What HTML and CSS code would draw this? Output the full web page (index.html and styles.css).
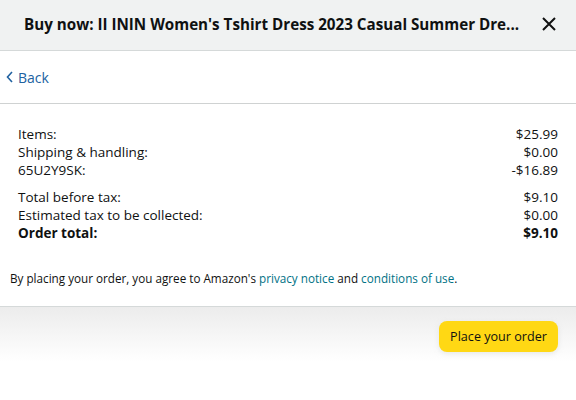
FILE: index.html
```html
<!DOCTYPE html>
<html>
<head>
<meta charset="utf-8">
<link rel="stylesheet" href="styles.css">
</head>
<body>
<div class="header">
  <div class="title">Buy now: II ININ Women's Tshirt Dress 2023 Casual Summer Dre...</div>
  <button class="close" aria-label="Close">
    <svg width="14" height="14" viewBox="0 0 14 14"><path d="M1 1L13 13M13 1L1 13" stroke="#111" stroke-width="2" fill="none"/></svg>
  </button>
</div>
<div class="backrow">
  <a class="back">
    <svg width="7" height="12" viewBox="0 0 7 12"><path d="M6 1L1.5 6L6 11" stroke="#2162a1" stroke-width="1.6" fill="none"/></svg>
    <span>Back</span>
  </a>
</div>
<div class="summary">
  <div class="group">
    <div class="row"><span>Items:</span><span>$25.99</span></div>
    <div class="row"><span>Shipping &amp; handling:</span><span>$0.00</span></div>
    <div class="row"><span>65U2Y9SK:</span><span>-$16.89</span></div>
  </div>
  <div class="group">
    <div class="row"><span>Total before tax:</span><span>$9.10</span></div>
    <div class="row"><span>Estimated tax to be collected:</span><span>$0.00</span></div>
    <div class="row total"><span>Order total:</span><span>$9.10</span></div>
  </div>
</div>
<div class="legal">By placing your order, you agree to Amazon's <a class="link">privacy notice</a> and <a class="link">conditions of use</a>.</div>
<div class="footer">
  <button class="place">Place your order</button>
</div>
</body>
</html>
```
FILE: styles.css
```css
* { box-sizing: border-box; }
html, body { margin: 0; padding: 0; background: #fff; }
body {
  font-family: "Open Sans", "Noto Sans", sans-serif;
  color: #0f1111;
  width: 576px;
  height: 400px;
  overflow: hidden;
}
.header {
  height: 51px;
  background: #f0f2f2;
  border-bottom: 1px solid #d5d9d9;
  display: flex;
  align-items: center;
  padding: 0 20px 0 24px;
}
.title {
  flex: 1;
  min-width: 0;
  font-size: 15.2px;
  font-weight: 700;
  white-space: nowrap;
  padding-bottom: 3px;
}
.close {
  border: 0;
  background: none;
  padding: 0;
  width: 14px;
  height: 14px;
  display: flex;
  margin-bottom: 3px;
}
.backrow {
  height: 53px;
  border-bottom: 1px solid #cfd2d2;
  display: flex;
  align-items: center;
  padding-left: 6px;
}
.back {
  display: flex;
  align-items: center;
  gap: 5px;
  color: #2162a1;
  font-size: 14px;
}
.summary {
  padding: 21px 18px 0 18px;
  display: flex;
  flex-direction: column;
  gap: 9px;
}
.row {
  display: flex;
  justify-content: space-between;
  font-size: 13.5px;
  line-height: 18px;
}
.total { font-weight: 700; }
.legal {
  font-size: 11.7px;
  padding: 0 10px;
  margin-top: 27px;
  height: 38px;
  line-height: 18px;
  border-bottom: 1px solid #d5d9d9;
}
.link { color: #007185; }
.footer {
  height: 93px;
  background: linear-gradient(#ececec, #fff 55px);
  display: flex;
  justify-content: flex-end;
  align-items: flex-start;
  padding: 14px 18px 0 0;
}
.place {
  background: #ffd814;
  border: 0;
  border-radius: 8px;
  height: 31px;
  width: 119px;
  font-family: inherit;
  font-size: 12.6px;
  color: #0f1111;
  box-shadow: 0 2px 5px rgba(213,217,217,.5);
  padding: 0;
}
```
